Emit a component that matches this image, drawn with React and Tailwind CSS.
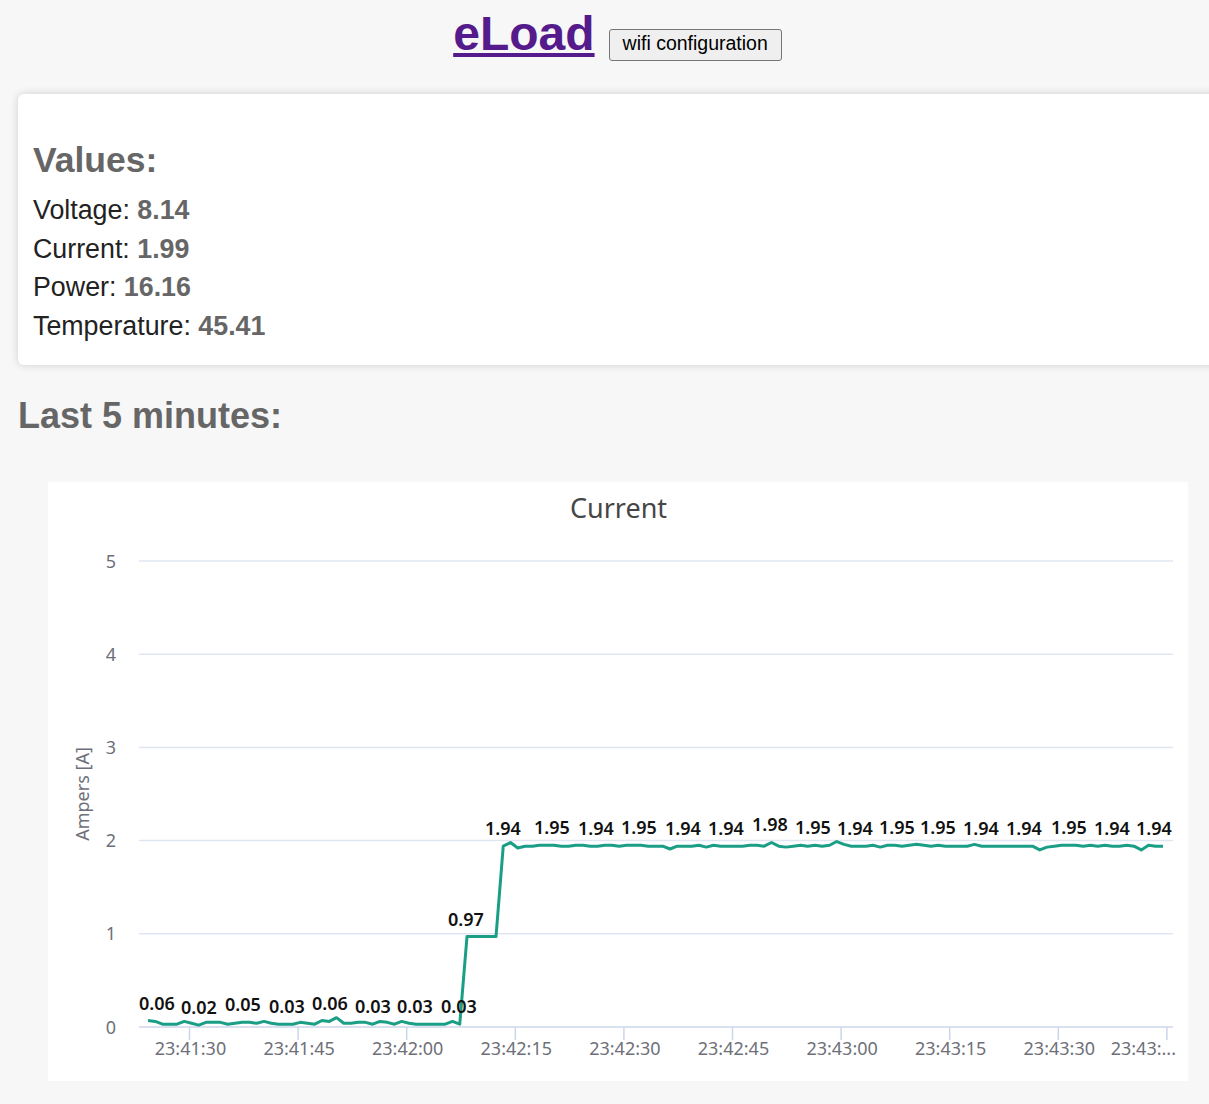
import React from 'react';

// one sample per second, 23:41:24 .. 23:43:44
const low = [0.07, 0.06, 0.03, 0.03, 0.03, 0.06, 0.04, 0.02, 0.05, 0.05, 0.05, 0.03, 0.04, 0.05, 0.05, 0.04, 0.06, 0.04, 0.03, 0.03, 0.03, 0.05, 0.04, 0.03, 0.07, 0.06, 0.10, 0.04, 0.04, 0.05, 0.05, 0.03, 0.06, 0.05, 0.03, 0.06, 0.04, 0.03, 0.03, 0.03, 0.03, 0.03, 0.06, 0.03];
const mid = [0.97, 0.97, 0.97, 0.97, 0.97];
const high = [
  1.94, 1.98, 1.92, 1.94, 1.94, 1.95, 1.95, 1.95, 1.94, 1.94, 1.95, 1.95, 1.94, 1.94, 1.95, 1.95,
  1.94, 1.95, 1.95, 1.95, 1.94, 1.94, 1.94, 1.91, 1.94, 1.94, 1.94, 1.95, 1.93, 1.95, 1.94, 1.94,
  1.94, 1.94, 1.95, 1.95, 1.94, 1.98, 1.94, 1.93, 1.94, 1.95, 1.94, 1.95, 1.94, 1.95, 1.99, 1.96,
  1.94, 1.94, 1.94, 1.95, 1.93, 1.95, 1.95, 1.94, 1.95, 1.96, 1.95, 1.94, 1.95, 1.94, 1.94, 1.94,
  1.94, 1.96, 1.94, 1.94, 1.94, 1.94, 1.94, 1.94, 1.94, 1.94, 1.90, 1.93, 1.94, 1.95, 1.95, 1.95,
  1.94, 1.95, 1.94, 1.95, 1.94, 1.94, 1.95, 1.94, 1.90, 1.95, 1.94, 1.94,
];
const samples = [...low, ...mid, ...high];

// point labels: [x, value]
const pointLabels = [
  [109, 0.06], [151, 0.02], [195, 0.05], [239, 0.03], [282, 0.06], [325, 0.03], [367, 0.03], [411, 0.03],
  [418, 0.97], [455, 1.94], [504, 1.95], [548, 1.94], [591, 1.95], [635, 1.94], [678, 1.94], [722, 1.98],
  [765, 1.95], [807, 1.94], [849, 1.95], [890, 1.95], [933, 1.94], [976, 1.94], [1021, 1.95], [1064, 1.94],
  [1106, 1.94],
];
const ticks = ['23:41:30', '23:41:45', '23:42:00', '23:42:15', '23:42:30', '23:42:45', '23:43:00', '23:43:15', '23:43:30'];

const px = (i) => 100 + i * 7.25;
const py = (v) => 545 - v * 93.2;

const CurrentChart = () => {
  const points = samples.map((v, i) => `${px(i).toFixed(2)},${py(v).toFixed(2)}`).join(' ');

  return (
    <svg width="1140" height="599" viewBox="0 0 1140 599" style={{ fontFamily: '"Noto Sans", "Open Sans", sans-serif' }}>
      <text x="570.5" y="36" textAnchor="middle" fontSize="27" fill="#464646">Current</text>

      {[1, 2, 3, 4, 5].map((v) => (
        <line key={v} x1="91" x2="1125" y1={py(v)} y2={py(v)} stroke="#e0e6f1" strokeWidth="1.5" />
      ))}
      {[0, 1, 2, 3, 4, 5].map((v) => (
        <text key={v} x="68" y={py(v) + 6.5} textAnchor="end" fontSize="18" fill="#6e7079">{v}</text>
      ))}

      <text transform="translate(41,312) rotate(-90)" textAnchor="middle" fontSize="18" fill="#6e7079">Ampers [A]</text>

      <line x1="91" x2="1125" y1="545" y2="545" stroke="#ccd6eb" strokeWidth="1.5" />
      {Array.from({ length: 10 }, (_, k) => (
        <line key={k} x1={141.5 + k * 108.6} x2={141.5 + k * 108.6} y1="545" y2="558" stroke="#ccd6eb" strokeWidth="1.5" />
      ))}
      {ticks.map((t, k) => (
        <text key={t} x={142.5 + k * 108.6} y="573" textAnchor="middle" fontSize="18" fill="#6e7079">{t}</text>
      ))}
      <text x="1128" y="573" textAnchor="end" fontSize="18" fill="#6e7079">23:43:...</text>

      <polyline points={points} fill="none" stroke="#1b9e86" strokeWidth="3" strokeLinejoin="round" />

      {pointLabels.map(([x, v], k) => (
        <text key={k} x={x} y={py(v) - 11} textAnchor="middle" fontSize="18" fontWeight="600" fill="#111">
          {v.toFixed(2)}
        </text>
      ))}
    </svg>
  );
};

const ValueRow = ({ label, value }) => (
  <div>
    {label}: <b className="text-[#666]">{value}</b>
  </div>
);

function App() {
  return (
    <div className="min-h-screen w-full overflow-hidden bg-[#f7f7f7] pb-6" style={{ fontFamily: '"Liberation Sans", Arial, sans-serif' }}>
      <div className="flex items-baseline justify-center gap-[14px] pl-[26px] pt-[6px]">
        <a href="#" className="text-[48px] font-bold leading-[56px] text-[#551a8b] underline">eLoad</a>
        <button type="button" className="h-[32px] rounded-[3px] border border-[#767676] bg-[#efefef] px-[13px] pb-[4px] text-[19.5px] leading-[26px] text-black">
          wifi configuration
        </button>
      </div>

      <div className="ml-[18px] mt-[32px] w-[1240px] rounded-md bg-white pb-[20px] pl-[15px] pt-[46px] shadow-[0_0_8px_rgba(0,0,0,0.16)]">
        <h2 className="text-[35.5px] font-bold leading-[40px] text-[#666]">Values:</h2>
        <div className="mt-[11px] text-[26.8px] leading-[38.6px] text-[#222]">
          <ValueRow label="Voltage" value="8.14" />
          <ValueRow label="Current" value="1.99" />
          <ValueRow label="Power" value="16.16" />
          <ValueRow label="Temperature" value="45.41" />
        </div>
      </div>

      <h2 className="ml-[18px] mt-[30px] text-[36px] font-bold leading-[41px] text-[#666]">Last 5 minutes:</h2>

      <div className="ml-[48px] mt-[46px] h-[599px] w-[1140px] bg-white">
        <CurrentChart />
      </div>
    </div>
  );
}

export default App;
